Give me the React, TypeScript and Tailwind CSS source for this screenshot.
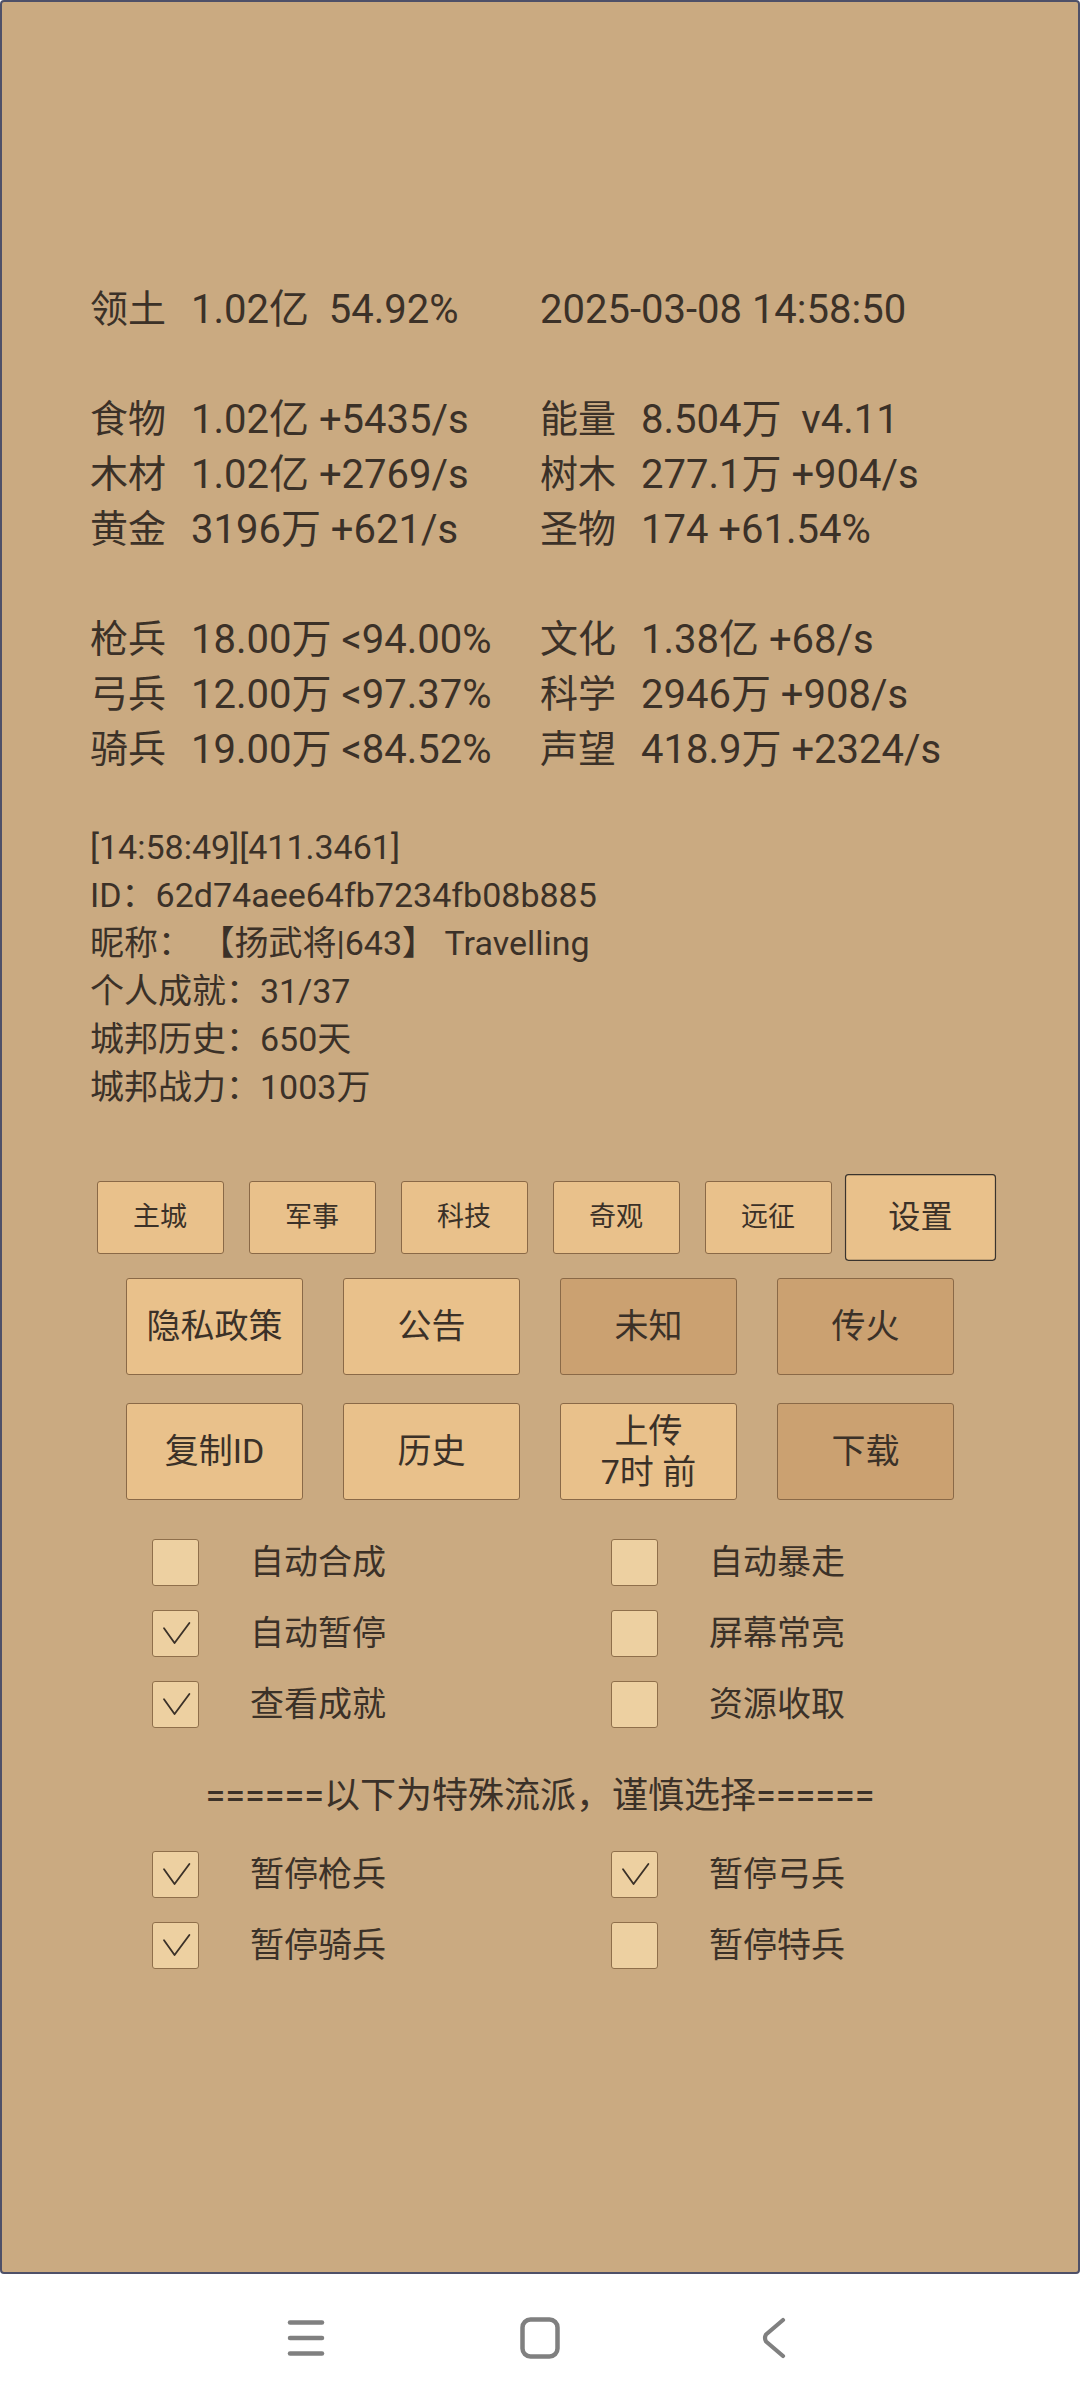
import { Fragment } from 'react'

const stats: [string, string, string, string][] = [
  ['领土', '1.02亿  54.92%', '', '2025-03-08 14:58:50'],
  ['', '', '', ''],
  ['食物', '1.02亿 +5435/s', '能量', '8.504万  v4.11'],
  ['木材', '1.02亿 +2769/s', '树木', '277.1万 +904/s'],
  ['黄金', '3196万 +621/s', '圣物', '174 +61.54%'],
  ['', '', '', ''],
  ['枪兵', '18.00万 <94.00%', '文化', '1.38亿 +68/s'],
  ['弓兵', '12.00万 <97.37%', '科学', '2946万 +908/s'],
  ['骑兵', '19.00万 <84.52%', '声望', '418.9万 +2324/s'],
]

const info = [
  '[14:58:49][411.3461]',
  'ID：62d74aee64fb7234fb08b885',
  '昵称： 【扬武将|643】 Travelling',
  '个人成就：31/37',
  '城邦历史：650天',
  '城邦战力：1003万',
]

const tabs = ['主城', '军事', '科技', '奇观', '远征']

const options: [string, boolean, string, boolean][] = [
  ['自动合成', false, '自动暴走', false],
  ['自动暂停', true, '屏幕常亮', false],
  ['查看成就', true, '资源收取', false],
]

const special: [string, boolean, string, boolean][] = [
  ['暂停枪兵', true, '暂停弓兵', true],
  ['暂停骑兵', true, '暂停特兵', false],
]

function StatCell({ label, value }: { label: string; value: string }) {
  return (
    <div className="flex whitespace-pre">
      {label && <span className="w-[101px] shrink-0 text-[38px]">{label}</span>}
      <span>{value}</span>
    </div>
  )
}

function BigButton({ children, dark }: { children: React.ReactNode; dark?: boolean }) {
  return (
    <button
      className={`w-[177px] h-[97px] flex flex-col items-center justify-center rounded-[3px] border-[1.5px] border-[#8a6947] text-[34px] leading-[41px] text-[#3b3128] ${
        dark ? 'bg-[#cba171]' : 'bg-[#e9c18b]'
      }`}
    >
      {children}
    </button>
  )
}

function Check({ checked, label }: { checked: boolean; label: string }) {
  return (
    <div className="flex items-center h-[47px]">
      <div className="w-[47px] h-[47px] rounded-[3px] border-[1.5px] border-[#8f6f4b] bg-[#edd0a1] flex items-center justify-center">
        {checked && (
          <svg width="47" height="47" viewBox="0 0 47 47" fill="none">
            <polyline points="11.5,18 22.5,33.5 38,12.5" stroke="#3b3128" strokeWidth="1.9" strokeLinecap="round" strokeLinejoin="round" />
          </svg>
        )}
      </div>
      <span className="ml-[51px] text-[34px] text-[#3b3128]">{label}</span>
    </div>
  )
}

function CheckGrid({ rows }: { rows: [string, boolean, string, boolean][] }) {
  return (
    <div className="grid grid-cols-[459px_1fr] gap-y-[24px] pl-[150px]">
      {rows.map(([l, lc, r, rc]) => (
        <Fragment key={l}>
          <Check label={l} checked={lc} />
          <Check label={r} checked={rc} />
        </Fragment>
      ))}
    </div>
  )
}

export default function App() {
  return (
    <div className="w-[1080px] h-[2400px] flex flex-col bg-white font-[Roboto,'Noto_Sans_CJK_SC',sans-serif] text-[#3b3128]">
      <div className="h-[2274px] shrink-0 bg-[#caaa81] border-2 border-[#4e5068] rounded-[4px] pt-[280px]">
        {/* resource lines */}
        <div className="grid grid-cols-[450px_1fr] pl-[88px] text-[40px] leading-[55px]">
          {stats.map(([l, lv, r, rv], i) => (
            <Fragment key={i}>
              {l || lv ? <StatCell label={l} value={lv} /> : <div className="h-[55px]" />}
              {r || rv ? <StatCell label={r} value={rv} /> : <div className="h-[55px]" />}
            </Fragment>
          ))}
        </div>

        <div className="mt-[46px] pl-[88px] text-[34px] leading-[48px] whitespace-pre">
          {info.map((line) => (
            <div key={line}>{line}</div>
          ))}
        </div>

        {/* tabs */}
        <div className="mt-[70px] flex justify-center gap-[25px]">
          {tabs.map((t) => (
            <button
              key={t}
              className="w-[127px] h-[73px] rounded-[3px] border-[1.5px] border-[#8a6947] bg-[#e9c18b] text-[27px] text-[#3b3128]"
            >
              {t}
            </button>
          ))}
          <button className="w-[127px] h-[73px] scale-[1.19] rounded-[3px] border-[1.5px] border-[#3a342e] bg-[#e9c18b] text-[27px] text-[#3b3128]">
            设置
          </button>
        </div>

        <div className="mt-[24px] flex justify-center gap-[40px]">
          <BigButton>隐私政策</BigButton>
          <BigButton>公告</BigButton>
          <BigButton dark>未知</BigButton>
          <BigButton dark>传火</BigButton>
        </div>

        <div className="mt-[28px] flex justify-center gap-[40px]">
          <BigButton>复制ID</BigButton>
          <BigButton>历史</BigButton>
          <BigButton>
            <span>上传</span>
            <span>7时 前</span>
          </BigButton>
          <BigButton dark>下载</BigButton>
        </div>

        <div className="mt-[39px]">
          <CheckGrid rows={options} />
        </div>

        <div className="mt-[43px] h-[50px] flex items-center justify-center text-[36px]">
          ======以下为特殊流派，谨慎选择======
        </div>

        <div className="mt-[30px]">
          <CheckGrid rows={special} />
        </div>
      </div>

      {/* system nav bar */}
      <div className="flex-1 flex justify-center items-center pt-[2px]">
        <div className="w-[234px] flex justify-center">
          <svg width="40" height="40" viewBox="0 0 40 40">
            <g stroke="#808080" strokeWidth="4.5" strokeLinecap="round">
              <line x1="4" y1="4.5" x2="36" y2="4.5" />
              <line x1="4" y1="20" x2="36" y2="20" />
              <line x1="4" y1="35.5" x2="36" y2="35.5" />
            </g>
          </svg>
        </div>
        <div className="w-[234px] flex justify-center">
          <svg width="40" height="42" viewBox="0 0 40 42">
            <rect x="2.5" y="2.5" width="35" height="37" rx="8" fill="none" stroke="#808080" strokeWidth="4.5" />
          </svg>
        </div>
        <div className="w-[234px] flex justify-center">
          <svg width="26" height="42" viewBox="0 0 26 42" fill="none">
            <path d="M22 3 L5 17.5 Q3 21 5 24.5 L22 39" stroke="#808080" strokeWidth="4.2" strokeLinecap="round" strokeLinejoin="round" />
          </svg>
        </div>
      </div>
    </div>
  )
}
